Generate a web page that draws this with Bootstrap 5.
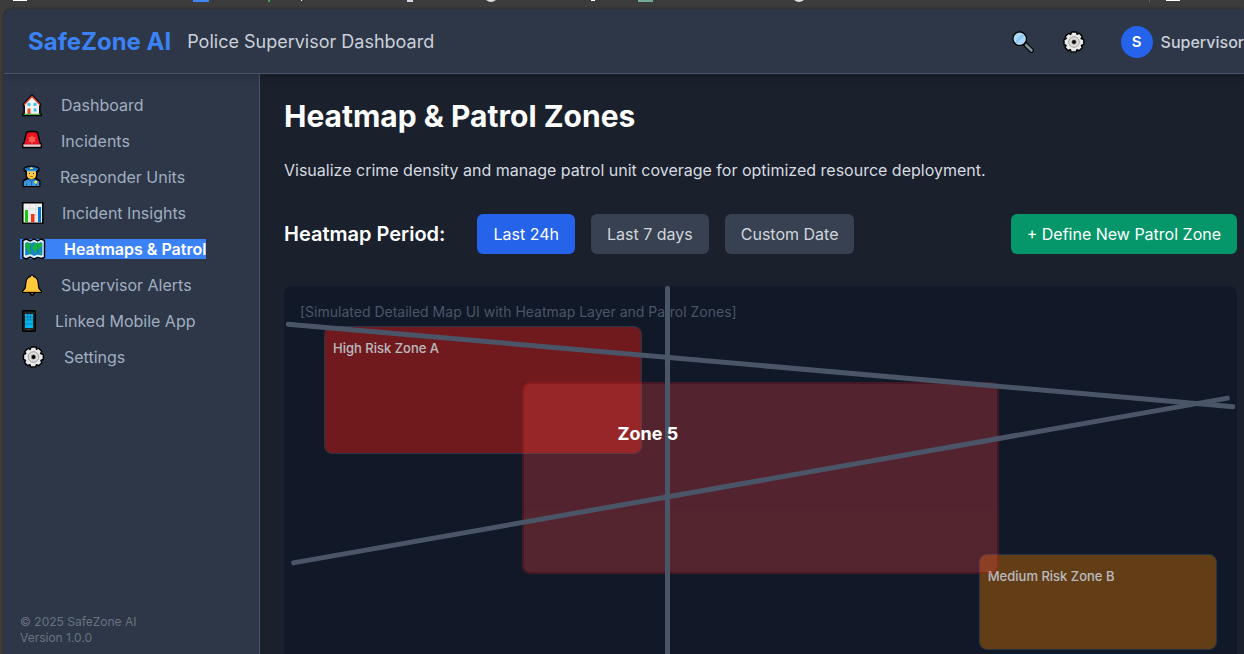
<!DOCTYPE html>
<html lang="en">
<head>
<meta charset="utf-8">
<meta name="viewport" content="width=device-width, initial-scale=1">
<title>SafeZone AI - Heatmap &amp; Patrol Zones</title>
<link href="https://cdn.jsdelivr.net/npm/bootstrap@5.3.0/dist/css/bootstrap.min.css" rel="stylesheet">
<style>
body { background: #3c3c3c; font-family: Inter, "Liberation Sans", sans-serif; font-size: 16px; line-height: 24px; color: #e2e8f0; }
.strip { height: 9px; }
.app-shell { margin-left: 4px; border-top-left-radius: 8px; background: #1a202c; box-shadow: 0 0 3px #222; min-height: 0; }
.topbar { height: 65px; padding: 2px 0 0 24px; background: #2d3748; border-bottom: 1px solid #4a5568; box-shadow: 0 4px 6px rgba(0,0,0,.12); z-index: 1; }
.brand { font-size: 24px; font-weight: 700; color: #3b82f6; text-decoration: none; }
.product { font-size: 18px; color: #cbd0d8; margin-left: 16px; }
.tool-btn { border: 0; background: none; padding: 0; line-height: 0; }
.tools { gap: 29px; }
.user-box { margin-left: 7px; font-weight: 500; color: #cbd0d8; gap: 8px; }
.avatar { width: 32px; height: 32px; background: #2563eb; color: #fff; font-size: 15px; font-weight: 600; }
.side { width: 256px; background: #2d3748; border-right: 1px solid #4a5568; padding: 21px 16px 8px; }
.side-list { gap: 16px; }
.side-link { display: inline-flex; align-items: center; height: 20px; padding-left: 2px; gap: 19px; color: #a0aec0; text-decoration: none; white-space: nowrap; }
.side-link.active { background: #3b82f6; color: #fff; font-weight: 600; }
.side-link svg { flex: none; overflow: visible; }
.side-foot { font-size: 12px; line-height: 16px; color: #6b7280; }
.content { padding: 24px 7px 24px 24px; min-width: 0; }
.content h1 { font-size: 30px; line-height: 36px; font-weight: 700; color: #fff; margin-bottom: 24px; }
.lede { margin-bottom: 32px; color: #d7dbe1; }
.controls { gap: 16px; margin-bottom: 32px; }
.controls h2 { font-size: 20px; line-height: 28px; font-weight: 600; color: #fff; margin: 0 16px 0 0; }
.ctl { height: 40px; padding: 0 16px; border: 0; border-radius: 6px; font-size: 16px; line-height: 24px; background: #374151; color: #d1d5db; white-space: nowrap; }
.ctl.active { background: #2563eb; color: #fff; }
.ctl.create { background: #059669; color: #fff; }
.map { height: 384px; flex: none; background: #111827; border-radius: 8px; }
.map-note { padding: 16px; font-size: 14px; line-height: 20px; color: #4a5568; margin: 0; }
.zone { position: absolute; border-radius: 8px; padding: 9px 8px; font-size: 13px; line-height: 24px; font-weight: 500; color: #fff; opacity: .7; border: 1px solid #334155; }
.zone-a { left: 40px; top: 40px; width: 33.33%; height: 33.33%; background: #991b1b; }
.zone-b { right: 20px; bottom: 20px; width: 25%; height: 25%; background: #854d0e; }
.zone-5 { left: 25%; top: 25%; width: 50%; height: 50%; background: #ef4444; border: 2px solid #b91c1c; opacity: .3; }
.road { position: absolute; background: #4a5568; border-radius: 2px; }
.road-1 { left: 0; top: 20%; width: 100%; height: 5px; transform: rotate(5deg); }
.road-2 { left: 0; top: 50%; width: 100%; height: 5px; transform: rotate(-10deg); }
.road-3 { left: 40%; top: 0; width: 5px; height: 100%; }
.zone-name { position: absolute; left: 35%; top: 35%; font-size: 18px; line-height: 27px; font-weight: 700; color: #fff; }
</style>
</head>
<body class="vh-100 overflow-hidden d-flex flex-column">
<svg class="strip w-100 flex-shrink-0" aria-hidden="true">
  <rect x="13" width="14" height="1" fill="#fff"/><rect x="193" width="16" height="2" fill="#4285f4"/><rect x="268" width="2" height="2" fill="#34a853"/><rect x="301" width="1" height="1" fill="#fff"/><rect x="407" width="6" height="2" fill="#d6d6e8"/><path d="M486 0h10q-5 4-10 0M794 0h10q-5 4-10 0" fill="#ddd"/><rect x="591" width="4" height="1" fill="#fff"/><rect x="638" width="15" height="2" fill="#74aa9c"/><rect x="1149" width="1" height="2" fill="#666"/><rect x="1166" width="14" height="1" fill="#fff"/>
</svg>
<div class="app-shell d-flex flex-column flex-grow-1 overflow-hidden">
  <header class="topbar d-flex align-items-center flex-shrink-0 position-relative">
    <a class="brand" href="#">SafeZone AI</a>
    <span class="product">Police Supervisor Dashboard</span>
    <div class="tools d-flex align-items-center ms-auto">
      <button class="tool-btn" type="button" aria-label="Search"><svg width="22" height="22" viewBox="0 0 22 22"><path d="M12 12l7.500 7.500" stroke="#000" stroke-width="5" stroke-linecap="round"/><path d="M14 14l5.500 5.500" stroke="#788c92" stroke-width="2.600" stroke-linecap="round"/><path d="M14.500 14l5 5" stroke="#9aa9ad" stroke-width=".8"/><circle cx="7.700" cy="7.700" r="6.700" fill="#a9d7f8" stroke="#000" stroke-width="1.400"/><circle cx="7.700" cy="7.700" r="5.700" fill="none" stroke="#cbdfe9" stroke-width=".5"/><path d="M3.300 10.500L10.500 3.300 12 5 5 12z" fill="#8ac5f2"/></svg></button>
      <button class="tool-btn" type="button" aria-label="Settings"><svg width="22" height="22" viewBox="0 0 22 22"><use href="#gear"/></svg></button>
      <div class="user-box d-flex align-items-center">
        <span class="avatar rounded-circle d-flex align-items-center justify-content-center">S</span>
        <span>Supervisor</span>
      </div>
    </div>
  </header>
  <div class="d-flex flex-grow-1 overflow-hidden">
    <aside class="side d-flex flex-column flex-shrink-0">
      <nav class="side-list d-flex flex-column align-items-start" aria-label="Main">
        <a class="side-link" href="#"><svg width="20" height="22" viewBox="0 0 20 22"><path d="M1.200 10.500L10 1l8.800 9.500-1 1.500v8h1.500v1.500H.7V20h1.500v-8z" fill="#f2f1ef" stroke="#000" stroke-width="1.500" stroke-linejoin="round"/><path d="M2 11l8-8.500 8 8.500" fill="none" stroke="#e7442e" stroke-width="1.300"/><path d="M5.500 9h3v3h-3zm6 0h3v3h-3zm0 5.500h3v3h-3z" fill="#35c5ef"/><path d="M5.500 14.500h3V20h-3z" fill="#e8492f"/><path d="M1.500 20.300h17" stroke="#4caf38" stroke-width="1.300"/></svg>Dashboard</a>
        <a class="side-link" href="#"><svg width="20" height="22" viewBox="0 0 20 22"><path d="M2 13L4 4Q4.700 1.500 7 1.500h6q2.300 0 3 2.500l2 9 1.300 1v3.500H.7V14z" fill="#e81224" stroke="#000" stroke-width="1.400" stroke-linejoin="round"/><path d="M1.500 14.500h17v2.300h-17z" fill="#cfd1d3"/><path d="M10 5l1.200 2.200 2.500-.2-1 2.500 1 2.500-2.500-.2L10 14l-1.200-2.200-2.500.2 1-2.500-1-2.500 2.500.2z" fill="#f0604d"/></svg>Incidents</a>
        <a class="side-link" href="#"><svg width="19" height="24" viewBox="0 0 19 24"><path d="M2 3Q9.500-1 17 3v3l-2 1v4l-1 2 4 2.500v6.200H1v-6.200L5 13l-1-2V7L2 6z" fill="#000" stroke="#000" stroke-width="1" stroke-linejoin="round"/><path d="M5 6h9v4q0 4-4.500 4T5 10z" fill="#ffc83d"/><path d="M2.500 3.500Q9.500.2 16.500 3.500L14.500 6h-10z" fill="#1979c3"/><path d="M5 6h9" stroke="#56b9ef" stroke-width="1"/><path d="M1.800 21v-4.500L6 14.300h7l4.200 2.200V21z" fill="#3a96dd"/><path d="M6 14l3.500 2.500L13 14M9.500 16v5M4.500 18.500V21M14.500 19v2" fill="none" stroke="#17518e" stroke-width=".7"/><path d="M9.500 1.700l.6 1.100 1.300.2-1 1H8.600l-1-1 1.300-.2zM12.500 16h2.500v2l-1.200.8-1.300-.8z" fill="#ffeb3b"/><circle cx="7.500" cy="8.500" r=".6"/><circle cx="11.500" cy="8.500" r=".6"/><path d="M8 11.500h3" stroke="#9b6621" stroke-width=".8"/></svg>Responder Units</a>
        <a class="side-link" href="#"><svg width="21" height="22" viewBox="0 0 21 22"><path d="M.8.800h20v20.400H.8z" fill="#f1f1f1" stroke="#000" stroke-width="1.500"/><path d="M8 2v18M14 2v18M2 7h18M2 13h18" stroke="#d8d8d8" stroke-width=".6"/><path d="M3 8h3v12H3z" fill="#16c60c"/><path d="M9 12h3.500v8H9z" fill="#f03a17"/><path d="M16 5h3v15h-3z" fill="#0078d7"/></svg>Incident Insights</a>
        <a class="side-link active" href="#" aria-current="page"><svg width="23" height="22" viewBox="0 0 22 22" preserveAspectRatio="none"><path d="M.8 2.500L4 1l4 2 3.500-2L15 3l3.500-2 3 1.500v17l-3 1-3.500-1-3.500 1.500L8 19l-4 2-3.200-1.500z" fill="#dff3fb" stroke="#000" stroke-width="1.400" stroke-linejoin="round"/><path d="M3 5l2-1 3 1.500 3.500-1.500L15 5.500 18 4l1.500 1v12l-1.500.5-3-1-3.500 1.500L8 16l-4 1.500-1-.5z" fill="#1684c9"/><path d="M3.500 5L8 5.500 9.500 7 8 9.500 6.500 10 9 12l-.5 3-1.500 1-1-3-3-4zM11 5.500L14 5.200 18.500 5l.8 3-2 1.500-1 2-2-.5-.3 2-1.500 2-1.200-3-1.500-1.500.5-2 1-1zM17 13.500l2 1-1 2-1.500-1z" fill="#16c60c" fill-opacity=".75"/><path d="M8 4v13M15 4v13" stroke="#126b9f" stroke-width=".4"/></svg>Heatmaps &amp; Patrol</a>
        <a class="side-link" href="#"><svg width="20" height="22" viewBox="0 0 20 22"><path d="M8 17h4.500v2q-.5 2-2.300 2T8 19z" fill="#9a582a" stroke="#000" stroke-width="1.300"/><path d="M10 1q1.500 0 1.700 1.600Q15.500 3.500 16 8l.8 6 2.500 3v1.500H.7V17l2.500-3L4 8q.5-4.500 4.300-5.400Q8.500 1 10 1z" fill="#ffc83d" stroke="#000" stroke-width="1.200" stroke-linejoin="round"/><path d="M2 17.400h16" stroke="#e19b24" stroke-width="1"/></svg>Supervisor Alerts</a>
        <a class="side-link" href="#"><svg width="14" height="22" viewBox="0 0 14 22"><rect x=".7" y=".7" width="12.600" height="20.600" rx="1" fill="#252525" stroke="#000" stroke-width="1.400"/><path d="M3 4h8v14H3z" fill="#00b7f1"/><path d="M3 7h8M3 10h8M3 14h8M5.800 4v6M8.500 4v6" stroke="#176b8d" stroke-width=".7"/><path d="M5.500 19.500h3" stroke="#555" stroke-width=".8"/></svg>Linked Mobile App</a>
        <a class="side-link" href="#"><svg width="23" height="22" viewBox="0 0 22 22"><g id="gear"><path d="M8.500 1h5l.6 2.200 2.200-1 3 3.200-1.200 2.200 2.700.9v5l-2.500.8 1 2.400-3.200 3-2.200-1-.8 2.200h-5l-.8-2.300-2.200 1.100-3-3.200 1-2.200L1 13.500v-5l2.200-.8-1-2.300 3.200-3 2.300 1z" fill="#e8e8e8" stroke="#000" stroke-width="1.400" stroke-linejoin="round"/><circle cx="11" cy="11" r="5.300" fill="#dcdcdc" stroke="#929292" stroke-width=".8"/><circle cx="11" cy="11" r="2.300" fill="#000" stroke="#aaa" stroke-width=".6"/></g></svg>Settings</a>
      </nav>
      <footer class="side-foot mt-auto">© 2025 SafeZone AI<br>Version 1.0.0</footer>
    </aside>
    <main class="content d-flex flex-column flex-grow-1">
      <h1>Heatmap &amp; Patrol Zones</h1>
      <p class="lede">Visualize crime density and manage patrol unit coverage for optimized resource deployment.</p>
      <div class="controls d-flex align-items-center">
        <h2>Heatmap Period:</h2>
        <button class="ctl active" type="button">Last 24h</button>
        <button class="ctl" type="button">Last 7 days</button>
        <button class="ctl" type="button">Custom Date</button>
        <button class="ctl create ms-auto" type="button">+ Define New Patrol Zone</button>
      </div>
      <section class="map position-relative overflow-hidden" aria-label="Patrol map">
        <p class="map-note">[Simulated Detailed Map UI with Heatmap Layer and Patrol Zones]</p>
        <div class="zone zone-a">High Risk Zone A</div>
        <div class="zone zone-b">Medium Risk Zone B</div>
        <div class="zone zone-5"></div>
        <div class="road road-1"></div>
        <div class="road road-2"></div>
        <div class="road road-3"></div>
        <div class="zone-name">Zone 5</div>
      </section>
    </main>
  </div>
</div>
<script src="https://cdn.jsdelivr.net/npm/bootstrap@5.3.0/dist/js/bootstrap.bundle.min.js"></script>
</body>
</html>
